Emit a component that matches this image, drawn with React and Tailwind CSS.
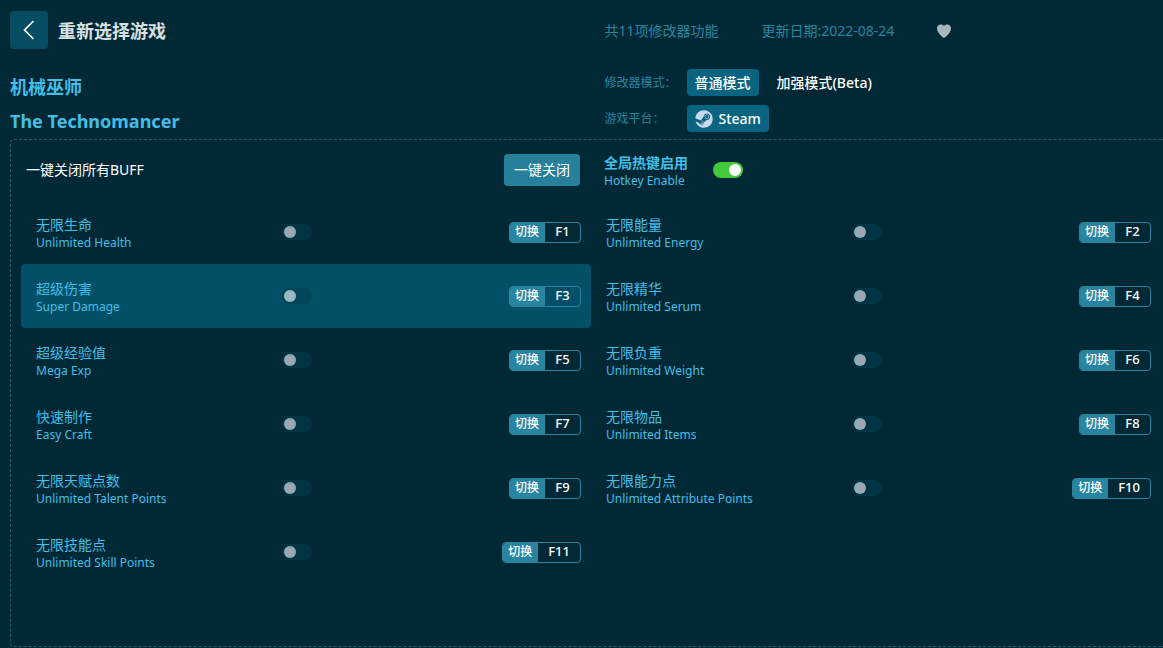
import React, { useState } from "react";
import { FaSteam } from "react-icons/fa";

const FEATURES = [
  { zh: "无限生命", en: "Unlimited Health", key: "F1" },
  { zh: "无限能量", en: "Unlimited Energy", key: "F2" },
  { zh: "超级伤害", en: "Super Damage", key: "F3", active: true },
  { zh: "无限精华", en: "Unlimited Serum", key: "F4" },
  { zh: "超级经验值", en: "Mega Exp", key: "F5" },
  { zh: "无限负重", en: "Unlimited Weight", key: "F6" },
  { zh: "快速制作", en: "Easy Craft", key: "F7" },
  { zh: "无限物品", en: "Unlimited Items", key: "F8" },
  { zh: "无限天赋点数", en: "Unlimited Talent Points", key: "F9" },
  { zh: "无限能力点", en: "Unlimited Attribute Points", key: "F10" },
  { zh: "无限技能点", en: "Unlimited Skill Points", key: "F11" },
];

function Toggle({ id, checked, onChange }) {
  return (
    <input
      id={id}
      type="checkbox"
      role="switch"
      checked={checked}
      onChange={onChange}
      className="flex h-4 w-[30px] shrink-0 cursor-pointer appearance-none items-center rounded-full bg-[#023e50] px-0.5 opacity-60 before:block before:size-3 before:rounded-full before:bg-white before:content-[''] checked:justify-end checked:bg-[#42c93c] checked:opacity-100"
    />
  );
}

function FeatureRow({ zh, en, hotkey, active }) {
  const [on, setOn] = useState(false);
  const id = "feature-" + hotkey;
  return (
    <li className={"flex h-16 items-center rounded pr-2.5 pl-[15px] " + (active ? "bg-[#025067]" : "")}>
      <label htmlFor={id} className="w-[246px] shrink-0 pt-[3px] text-[#43bee6]">
        <span className="block text-sm leading-[18px]">{zh}</span>
        <span className="block text-xs leading-[17px]">{en}</span>
      </label>
      <Toggle id={id} checked={on} onChange={() => setOn(!on)} />
      <button
        type="button"
        onClick={() => setOn(!on)}
        className="ml-auto flex h-[21px] overflow-hidden rounded border border-[#2984a0] font-medium text-white"
      >
        <span className="bg-[#2984a0] pr-1.5 pl-[5px] text-xs leading-[18px]">切换</span>
        <span className="min-w-[35px] px-2.5 text-center text-[13px] leading-[17px]">{hotkey}</span>
      </button>
    </li>
  );
}

export default function App() {
  const [hotkeys, setHotkeys] = useState(true);
  return (
    <div className="flex min-h-screen flex-col bg-[#012935] pb-px pl-2.5 font-['Noto_Sans','Noto_Sans_CJK_SC',sans-serif]">
      <header className="grid grid-cols-2 pt-[11px]">
        <div className="pb-px">
          <div className="mb-5 flex h-[38px] items-center gap-2.5">
            <button
              type="button"
              aria-label="返回"
              className="flex size-[38px] items-center justify-center rounded bg-[#054d62]"
            >
              <svg viewBox="0 0 12 20" className="h-5 w-3" fill="none" stroke="#fff" strokeWidth="1.7">
                <path d="M10.500 1 1.500 10l9 9" />
              </svg>
            </button>
            <span className="pt-0.5 text-lg font-bold text-[#d8e0e3]">重新选择游戏</span>
          </div>
          <h1 className="text-lg font-bold text-[#45bde6]">
            <span className="block leading-9">机械巫师</span>
            <span className="block leading-[33px]">The Technomancer</span>
          </h1>
        </div>
        <div className="pl-[18px]">
          <div className="mb-5 flex h-[38px] items-center gap-[43px] text-sm text-[#29849f]">
            <span className="pt-0.5">共11项修改器功能</span>
            <span className="pt-0.5">更新日期:2022-08-24</span>
            <button type="button" aria-label="收藏" className="pt-0.5">
              <svg viewBox="0 0 14 14" className="size-3.5" fill="#a9b8be">
                <path d="M7 2C5.6-.2 0-.4 0 4.3 0 8 3.8 12.2 7 14c3.200-1.800 7-6 7-9.700C14-.4 8.400-.2 7 2z" />
              </svg>
            </button>
          </div>
          <div className="mb-[9px] flex h-[27px] items-center">
            <span className="w-[82px] text-xs text-[#29849f]">修改器模式：</span>
            <div className="flex gap-2.5 text-sm font-medium text-white">
              <button type="button" className="h-[27px] rounded bg-[#0a6480] px-2 leading-[27px]">普通模式</button>
              <button type="button" className="h-[27px] rounded px-2 leading-[27px]">加强模式(Beta)</button>
            </div>
          </div>
          <div className="flex h-[27px] items-center">
            <span className="w-[82px] text-xs text-[#29849f]">游戏平台：</span>
            <button
              type="button"
              className="flex h-[27px] items-center gap-1.5 rounded bg-[#0a6480] px-2 text-sm font-medium text-white"
            >
              <FaSteam className="size-[18px] text-[#c8d9ee]" />
              Steam
            </button>
          </div>
        </div>
      </header>

      <main className="flex-1 rounded-l border border-r-0 border-dashed border-[#1c6073] pr-0.5 pl-2.5">
        <div className="grid h-[60px] grid-cols-2 items-center">
          <div className="flex items-center justify-between pr-[11px] pl-[5px]">
            <span className="text-sm text-white">一键关闭所有BUFF</span>
            <button type="button" className="h-8 rounded bg-[#26809b] px-2.5 text-sm text-white">一键关闭</button>
          </div>
          <div className="flex items-center gap-[25px] pl-[13px]">
            <label htmlFor="global-hotkeys" className="pt-[3px] text-[#43bee6]">
              <span className="block text-sm leading-[18px] font-bold">全局热键启用</span>
              <span className="block text-xs leading-[17px]">Hotkey Enable</span>
            </label>
            <Toggle id="global-hotkeys" checked={hotkeys} onChange={() => setHotkeys(!hotkeys)} />
          </div>
        </div>
        <ul className="grid grid-cols-2">
          {FEATURES.map((f) => (
            <FeatureRow key={f.key} zh={f.zh} en={f.en} hotkey={f.key} active={f.active} />
          ))}
        </ul>
      </main>
    </div>
  );
}
